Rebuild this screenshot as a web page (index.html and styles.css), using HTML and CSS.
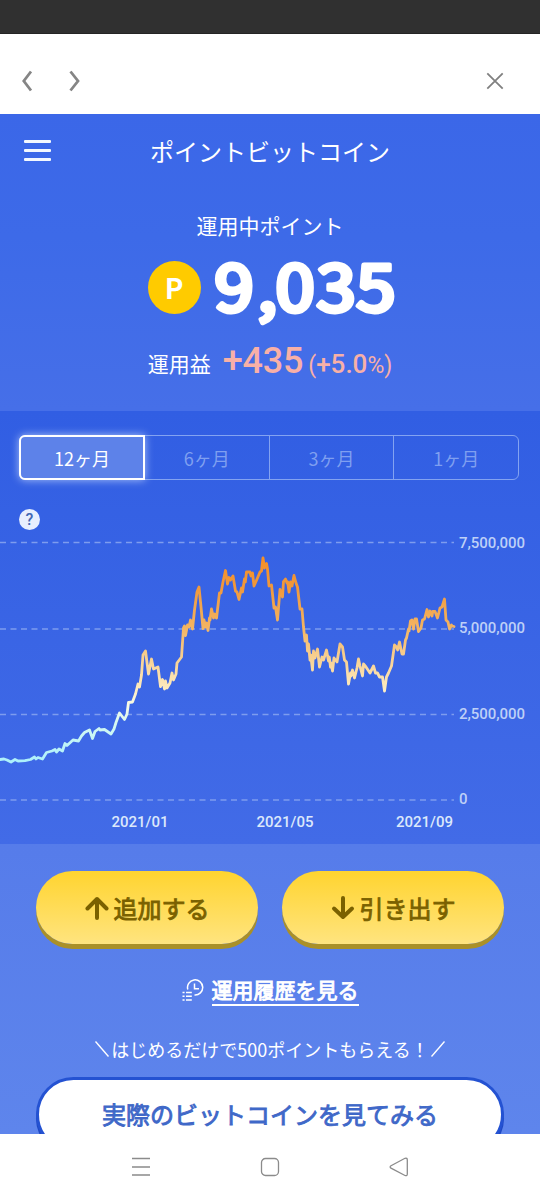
FILE: index.html
```html
<!DOCTYPE html>
<html lang="ja">
<head>
<meta charset="UTF-8">
<meta name="viewport" content="width=device-width, initial-scale=1.0">
<title>ポイントビットコイン</title>
<link rel="stylesheet" href="styles.css">
</head>
<body>

<div class="status-bar"></div>

<!-- Browser bar -->
<div class="browser-bar">
    <svg class="nav-arrows" width="60" height="24" viewBox="0 0 60 24">
        <path d="M10 2.5 L2.8 12 L10 21.5"/>
        <path d="M49.5 2.5 L57 12 L49.5 21.5"/>
    </svg>
    <svg class="close" width="18" height="18" viewBox="0 0 18 18">
        <path d="M1.3 1.3 L16.7 16.7 M16.7 1.3 L1.3 16.7"/>
    </svg>
</div>

<main class="app">
    <header class="header">
        <div class="menu"><span></span><span></span><span></span></div>
        <h1>ポイントビットコイン</h1>
    </header>

    <!-- Points -->
    <section class="summary">
        <p class="summary-label">運用中ポイント</p>
        <div class="points">
            <span class="coin">P</span>
            <svg class="points-value" width="182" height="72" viewBox="0 0 182 72">
                <text transform="scale(1.12 1)" y="59" x="18 47.5 72.5 109 144.5">9,035</text>
            </svg>
        </div>
        <div class="profit">
            <span class="profit-label">運用益</span>
            <span class="profit-value">+435</span>
            <span class="profit-rate"><small>(</small>+5.0<small>%)</small></span>
        </div>
    </section>

    <!-- Chart -->
    <section class="chart-panel">
        <div class="tabs">
            <div class="tab active">12ヶ月</div>
            <div class="tab">6ヶ月</div>
            <div class="tab">3ヶ月</div>
            <div class="tab">1ヶ月</div>
        </div>
        <div class="help">?</div>
        <svg class="chart" width="540" height="314" viewBox="0 -10 540 314">
            <defs>
                <linearGradient id="price" gradientUnits="userSpaceOnUse" x1="0" y1="18" x2="0" y2="222">
                    <stop offset="0" stop-color="#f58f25"/>
                    <stop offset="0.14" stop-color="#f0983c"/>
                    <stop offset="0.34" stop-color="#f3b462"/>
                    <stop offset="0.5" stop-color="#f8d295"/>
                    <stop offset="0.64" stop-color="#fdebbf"/>
                    <stop offset="0.72" stop-color="#f6fbe6"/>
                    <stop offset="0.82" stop-color="#d3f8f2"/>
                    <stop offset="1" stop-color="#acf0fb"/>
                </linearGradient>
            </defs>
            <g class="grid">
                <path d="M0 2.5H454"/>
                <path d="M0 89H454"/>
                <path d="M0 174.5H454"/>
                <path d="M0 260H454"/>
            </g>
            <polyline class="line" points="0,219.5 4,219 7,220 11,222 15,219.5 18,221 25,220.7 30.5,219.5 34.5,217 36,219 38,217.5 42.5,219 46.5,212.5 52,211 55,209.5 56.5,212 59,209 62.5,211 65,203.5 67,205.5 73,200 78.5,201 81.5,196 84.5,192.5 89.5,190 92.5,198.5 95,191.5 99,188.5 100,190 104.5,189.5 111,194 114,189 116,182.5 119.5,173 124.5,179.5 127,174 128.5,162.5 132.5,162 135.5,154 138,144 139.5,147 141.5,135 143,115 145.5,111 148.5,134 151.5,119 153.5,129 158,127 160.5,146.5 162.5,139.5 164.5,149 165.5,141 167,148 170,143 172,133 173.5,140 176,134 177,123 180,119
            181.5,117 183.5,88 184.5,86 185.5,95.5 187.5,85 189,87 190.5,80 192.5,89 194.5,70 197,52 199,47 201,67 203,88.5 204,80 205.5,87 206.5,83 208,90.5 209.5,78 210,80 211.5,69 213.5,78 214.5,74 216.5,78 219.5,53 221,53 223,42 225.5,30.5 227.5,44 229,37.5 230.5,40 233,36 235.5,51 237,52 239,59.5 241.5,48 242.5,52 244.5,39 245.3,42 246.5,32 250,32 251,36 252.5,33 254,46 257.5,38 260,32 261.5,31 263,18 264.5,28 266.5,23.5 267.5,29 269,46 271.5,45 274,68 275.5,67 277.5,80 280,49.5 282.5,57 283.5,41.5 285.5,39 287,43 287.7,42 289,52 290.5,42 292,46 294,35.5 296,43 297.5,47
            300,69 302,69 303.5,87 305,101 306.5,95 307.5,111 308.5,104 310,120 310.7,115 312.5,130 313.5,111 315,118 317.5,109 319.5,127 322,117 323.5,120 326.5,110 328.5,121 329.3,117 330.5,127 331,123 332.5,131 334,118 337,122 340,104 342.5,107 344.5,120 346.5,122 348.5,144 350.5,133 351,136 352.5,130 354.5,138 357,128 358.5,119 360,126 362.5,136 363.5,124 366,127 370,133 373.5,126 375.5,133 377.5,133 379.5,137 382.5,137 384.5,151 386.5,137 388.5,133 391.5,126 394.5,105 396.5,107 397.7,110 399.5,102 402,114 403.5,114 405.5,100 406.5,98 408.5,89 409,91 410.5,81 412,80 413.5,89 415,79 416.5,79 418.5,91.5 421,88 422.5,80 424.5,79 427,69.5 428.5,77 430,71 432,76 432.7,71.5 435,71.5 437.5,78 440,68 442,67 444.5,59 446,80 448,82 449.5,89 451.5,85 452.3,86 454,86.5"/>
            <g class="y-labels">
                <text x="459" y="7.5" textLength="66">7,500,000</text>
                <text x="459" y="93" textLength="66">5,000,000</text>
                <text x="459" y="178.5" textLength="66">2,500,000</text>
                <text x="459" y="264">0</text>
            </g>
            <g class="x-labels">
                <text x="111.5" y="286.5" textLength="57">2021/01</text>
                <text x="256.5" y="286.5" textLength="57">2021/05</text>
                <text x="396" y="286.5" textLength="57">2021/09</text>
            </g>
        </svg>
    </section>

    <!-- Actions -->
    <section class="actions">
        <div class="buttons">
            <button class="btn">
                <svg width="24" height="24" viewBox="0 0 24 24"><path d="M12 22V3 M2.5 12.5L12 3L21.5 12.5"/></svg>
                <span>追加する</span>
            </button>
            <button class="btn">
                <svg width="24" height="24" viewBox="0 0 24 24"><path d="M12 2V21 M3 12.5L12 21L21 12.5"/></svg>
                <span>引き出す</span>
            </button>
        </div>
        <div class="history">
            <svg width="22" height="22" viewBox="0 0 22 22">
                <path d="M5.8 10.5A7.6 7.6 0 1 1 12.5 16"/>
                <path d="M12.5 4.5V9.7H17"/>
                <path d="M0.5 13.4H2.6 M4 13.4H9.8 M0.5 17.2H2.6 M4 17.2H9.8 M0.5 21H2.6 M4 21H9.8"/>
            </svg>
            <a>運用履歴を見る</a>
        </div>
        <div class="campaign">
            <svg width="14" height="16" viewBox="0 0 14 16"><path d="M0.5 0.5L13.5 15.5"/></svg>
            <span>はじめるだけで500ポイントもらえる！</span>
            <svg width="14" height="16" viewBox="0 0 14 16"><path d="M13.5 0.5L0.5 15.5"/></svg>
        </div>
        <button class="btn-bitcoin">実際のビットコインを見てみる</button>
    </section>
</main>

<!-- System navigation -->
<nav class="system-nav">
    <svg width="20" height="20" viewBox="0 0 20 20"><path d="M1 1.5H19 M1 10H19 M1 18H19"/></svg>
    <svg width="20" height="20" viewBox="0 0 20 20"><rect x="1.5" y="1.5" width="17" height="17" rx="4"/></svg>
    <svg width="20" height="20" viewBox="0 0 20 20"><path d="M2 8.8L16 1.3Q18.3 0.6 18.3 3V17Q18.3 19.3 16 18.5L2 11.2Q0.3 10 2 8.8Z"/></svg>
</nav>

</body>
</html>
```
FILE: styles.css
```css
/* General Styles */
* {
    margin: 0;
    padding: 0;
    box-sizing: border-box;
}

body {
    width: 540px;
    height: 1200px;
    overflow: hidden;
    display: flex;
    flex-direction: column;
    background: #fff;
    color: #fff;
    font-family: "Noto Sans CJK JP", sans-serif;
}

svg {
    display: block;
    flex: none;
    fill: none;
}

button {
    border: none;
    font-family: inherit;
}

.status-bar {
    flex: none;
    height: 34px;
    background: #303030;
    border-bottom: 1px solid #242424;
}

/* Browser bar */
.browser-bar {
    flex: none;
    height: 80px;
    padding: 14px 36px 0 21px;
    display: flex;
    align-items: center;
    justify-content: space-between;
    background: #fff;
}

.nav-arrows {
    stroke: #858585;
    stroke-width: 2.8;
}

.close {
    stroke: #808080;
    stroke-width: 1.8;
}

.app {
    flex: none;
    height: 1020px;
    overflow: hidden;
    background: linear-gradient(#3b67e8 0%, #3d6ae8 12%, #466fe8 29%, #567cea 72%, #5e85ec 100%);
}

/* Header */
.header {
    height: 72px;
    padding: 0 24px;
    display: grid;
    grid-template-columns: 27px 1fr 27px;
    align-items: center;
}

.menu {
    display: flex;
    flex-direction: column;
    gap: 6px;
}

.menu span {
    height: 3px;
    border-radius: 1px;
    background: #f3f8ff;
}

h1 {
    font-size: 24px;
    font-weight: 400;
    line-height: 36px;
    text-align: center;
    padding-top: 1px;
}

/* Points */
.summary {
    height: 225px;
    padding-top: 24px;
    display: flex;
    flex-direction: column;
    align-items: center;
}

.summary-label {
    font-size: 21px;
    line-height: 30px;
}

.points {
    height: 72px;
    margin-top: 12px;
    display: flex;
    align-items: center;
    gap: 13px;
    padding-left: 3px;
}

.coin {
    width: 53px;
    height: 53px;
    border-radius: 50%;
    margin-top: -1px;
    background: #ffcb00;
    font-size: 28px;
    font-weight: 700;
    line-height: 53px;
    text-align: center;
}

.points-value {
    overflow: visible;
}

.points-value text {
    font-size: 63px;
    font-weight: 400;
    text-anchor: middle;
    fill: #fff;
    stroke: #fff;
    stroke-width: 4.8;
    stroke-linejoin: round;
}

.profit {
    margin-top: 12px;
    display: flex;
    align-items: baseline;
    line-height: 48px;
}

.profit-label {
    font-size: 21px;
    margin-right: 12px;
}

.profit-value,
.profit-rate {
    position: relative;
    top: 1px;
    font-family: Roboto, sans-serif;
    font-weight: 500;
    color: #f8b0a7;
}

.profit-value {
    font-size: 36px;
    letter-spacing: -0.2px;
    margin-right: 5px;
}

.profit-rate {
    font-size: 26px;
}

.profit-rate small {
    font-size: 23px;
    font-weight: 400;
}

/* Chart */
.chart-panel {
    height: 433px;
    padding-top: 24px;
    background: linear-gradient(#315ee3, #426be7);
}

.tabs {
    height: 45px;
    margin: 0 21px 0 19px;
    display: flex;
    border: 1px solid #83a3f1;
    border-radius: 6px;
}

.tab {
    flex: 1;
    border-left: 1px solid #83a3f1;
    font-size: 18px;
    line-height: 45px;
    text-align: center;
    color: #7f9ff0;
}

.tab.active {
    flex: 0 0 126px;
    margin: -1px 0 -1px -1px;
    border: 2px solid #fff;
    border-radius: 6px 0 0 6px;
    background: #5d82e9;
    box-shadow: 0 0 9px rgba(210, 225, 255, 0.75);
    line-height: 43px;
    color: #fff;
}

.tab.active + .tab {
    border-left: none;
}

.help {
    width: 21px;
    height: 21px;
    margin: 29px 0 0 19px;
    border-radius: 50%;
    background: #e8effe;
    font-family: Roboto, sans-serif;
    font-size: 16px;
    font-weight: 500;
    line-height: 22px;
    text-align: center;
    color: #4267b4;
}

.grid path {
    stroke: #7e9cee;
    stroke-width: 1.3;
    stroke-dasharray: 6 4.5;
}

.line {
    stroke: url(#price);
    stroke-width: 2.8;
    stroke-linejoin: round;
    stroke-linecap: round;
}

.y-labels,
.x-labels {
    font-family: Roboto, sans-serif;
    font-size: 15px;
    font-weight: 500;
    fill: #bed0f7;
}

.x-labels {
    fill: #dce8fb;
}

/* Actions */
.actions {
    padding: 27px 36px 0;
}

.buttons {
    display: flex;
    gap: 24px;
}

.btn {
    flex: 1;
    height: 73px;
    border-radius: 37px;
    display: flex;
    align-items: center;
    justify-content: center;
    gap: 5px;
    background: linear-gradient(#ffd42f, #ffe47f);
    box-shadow: 0 5px 0 #aa9028;
    font-size: 24px;
    color: #7a6100;
}

.btn,
.history a,
.btn-bitcoin {
    font-weight: 400;
    -webkit-text-stroke: 0.9px currentColor;
}

.btn svg {
    stroke: #7a6100;
    stroke-width: 4;
    stroke-linecap: round;
    stroke-linejoin: round;
}

.history {
    margin-top: 30px;
    display: flex;
    justify-content: center;
    gap: 8px;
}

.history svg {
    margin-top: 5px;
    stroke: #fff;
    stroke-width: 1.5;
}

.history a {
    height: 32px;
    border-bottom: 2px solid #fff;
    font-size: 21px;
    line-height: 30px;
}

.campaign {
    height: 28px;
    margin-top: 29px;
    display: flex;
    align-items: center;
    justify-content: center;
    gap: 2px;
    font-size: 18px;
    white-space: nowrap;
}

.campaign svg {
    stroke: #fff;
    stroke-width: 1.4;
}

.btn-bitcoin {
    display: block;
    width: 468px;
    height: 75px;
    margin-top: 14px;
    padding-bottom: 2px;
    border: 3px solid #2452d2;
    border-radius: 38px;
    background: #fff;
    box-shadow: 0 4px 0 #1f49c4;
    font-size: 24px;
    color: #3f68c8;
}

/* System navigation */
.system-nav {
    height: 66px;
    padding: 0 131px;
    display: flex;
    align-items: center;
    justify-content: space-between;
    background: #fff;
}

.system-nav svg {
    stroke: #8b8b8b;
    stroke-width: 1.3;
}
```
